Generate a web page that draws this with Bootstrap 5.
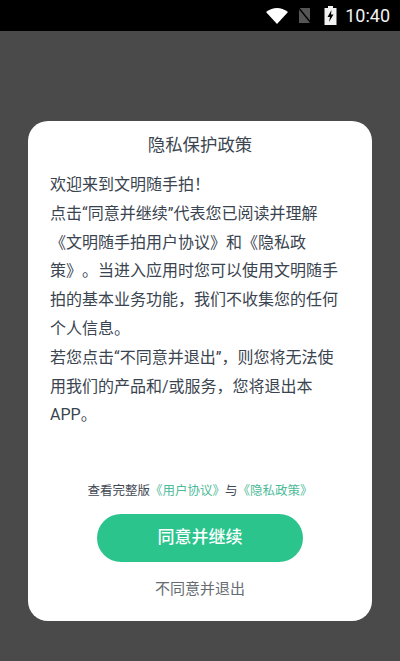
<!DOCTYPE html>
<html lang="zh-CN">
<head>
<meta charset="utf-8">
<title>隐私保护政策</title>
<link href="https://cdn.jsdelivr.net/npm/bootstrap@5.3.0/dist/css/bootstrap.min.css" rel="stylesheet">
<style>
html,body{height:100%;}
body{background:#4a4a4a;font-family:Roboto,"Noto Sans CJK SC",sans-serif;overflow:hidden;}
.shell{height:661px;}
.statusbar{height:31px;background:#000;color:#f2f2f2;padding-right:10px;font-family:Roboto,sans-serif;font-size:18px;font-weight:400;}
.stage{height:630px;padding:90px 28px 40px;}
.sheet{height:500px;border-radius:20px;background:#fff;padding:12px 22px 0;border:0;}
.sheet-title{font-size:17.4px;line-height:24px;color:#3c4650;font-weight:400;margin:0 0 14px;}
.sheet-body{font-size:16px;line-height:28.8px;color:#3a4450;margin:0;height:311px;padding-right:3px;}
.sheet-body p{margin:0;}
.sheet-links{font-size:12.5px;line-height:18px;color:#3f4853;margin-bottom:14px;white-space:nowrap;}
.sheet-links a{color:#4dbb98;text-decoration:none;}
.agree{width:206px;height:48px;border-radius:24px;background:#2bc48d;border:0;color:#fff;font-size:17px;font-weight:500;padding:0;}
.agree:hover{background:#2bc48d;color:#fff;}
.refuse{font-size:15px;color:#666c72;padding:0;border:0;margin-top:15px;line-height:24px;}
.clock{margin-left:8px;}
.sim-icon{margin-left:9px;}
.batt-icon{margin-left:12px;}
</style>
</head>
<body>
<div class="shell d-flex flex-column">
  <div class="statusbar d-flex align-items-center justify-content-end">
    <svg width="22" height="17" viewBox="0 0 22 17"><path d="M0 5 Q11 -3 22 5 L11 17 Z" fill="#fff"/></svg>
    <svg class="sim-icon" width="15" height="17" viewBox="0 0 15 17"><path d="M2 1H13V16H2Z" fill="#555"/><path d="M1 0L14 16" stroke="#000" stroke-width="1.4"/></svg>
    <svg class="batt-icon" width="13" height="19" viewBox="0 0 13 19"><path d="M4 0H9V2H12.5V19H.5V2H4Z" fill="#f2f2f2"/><path d="M7.5 4L3.5 11H6L5 16L9.5 8.5H7Z" fill="#000"/></svg>
    <span class="clock">10:40</span>
  </div>
  <div class="stage">
    <div class="card sheet">
      <h1 class="sheet-title text-center">隐私保护政策</h1>
      <div class="sheet-body">
        <p>欢迎来到文明随手拍！</p>
        <p>点击“同意并继续”代表您已阅读并理解《文明随手拍用户协议》和《隐私政<wbr>策》&#8288;。当进入应用时您可以使用文明随手拍的基本业务功能，我们不收集您的任何个人信息。</p>
        <p>若您点击“不同意并退出”，则您将无法使用我们的产品和/或服务，您将退出本APP。</p>
      </div>
      <div class="sheet-links text-center">查看完整版<a href="#">《用户协议》</a>与<a href="#">《隐私政策》</a></div>
      <div class="d-flex flex-column align-items-center">
        <button type="button" class="btn agree">同意并继续</button>
        <button type="button" class="btn refuse">不同意并退出</button>
      </div>
    </div>
  </div>
</div>
<script src="https://cdn.jsdelivr.net/npm/bootstrap@5.3.0/dist/js/bootstrap.bundle.min.js"></script>
</body>
</html>
